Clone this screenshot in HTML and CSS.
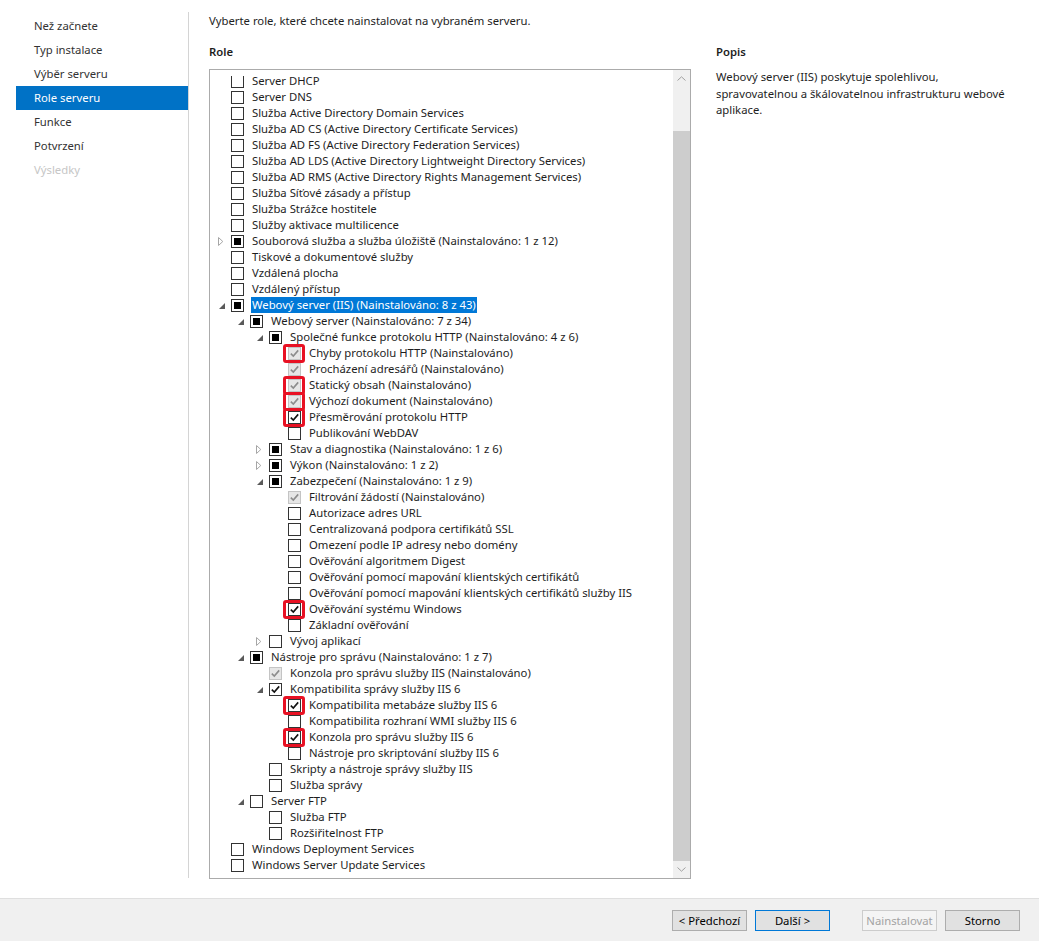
FILE: index.html
```html
<!DOCTYPE html>
<html lang="cs">
<head>
<meta charset="utf-8">
<title>Průvodce přidáním rolí a funkcí</title>
<link rel="stylesheet" href="styles.css">
</head>
<body>
<div class="main">
  <nav class="nav">
    <div class="nav-item">Než začnete</div>
    <div class="nav-item">Typ instalace</div>
    <div class="nav-item">Výběr serveru</div>
    <div class="nav-item active">Role serveru</div>
    <div class="nav-item">Funkce</div>
    <div class="nav-item">Potvrzení</div>
    <div class="nav-item disabled">Výsledky</div>
  </nav>
  <section class="content">
    <p class="intro">Vyberte role, které chcete nainstalovat na vybraném serveru.</p>
    <div class="columns">
      <div class="roles">
        <h2 class="heading">Role</h2>
        <div class="listbox">
          <div class="viewport">
            <div class="tree">
              <div class="row l0"><span class="exp"></span><span class="cb"></span><span class="lbl">Server DHCP</span></div>
              <div class="row l0"><span class="exp"></span><span class="cb"></span><span class="lbl">Server DNS</span></div>
              <div class="row l0"><span class="exp"></span><span class="cb"></span><span class="lbl">Služba Active Directory Domain Services</span></div>
              <div class="row l0"><span class="exp"></span><span class="cb"></span><span class="lbl">Služba AD CS (Active Directory Certificate Services)</span></div>
              <div class="row l0"><span class="exp"></span><span class="cb"></span><span class="lbl">Služba AD FS (Active Directory Federation Services)</span></div>
              <div class="row l0"><span class="exp"></span><span class="cb"></span><span class="lbl">Služba AD LDS (Active Directory Lightweight Directory Services)</span></div>
              <div class="row l0"><span class="exp"></span><span class="cb"></span><span class="lbl">Služba AD RMS (Active Directory Rights Management Services)</span></div>
              <div class="row l0"><span class="exp"></span><span class="cb"></span><span class="lbl">Služba Síťové zásady a přístup</span></div>
              <div class="row l0"><span class="exp"></span><span class="cb"></span><span class="lbl">Služba Strážce hostitele</span></div>
              <div class="row l0"><span class="exp"></span><span class="cb"></span><span class="lbl">Služby aktivace multilicence</span></div>
              <div class="row l0"><span class="exp closed"><svg width="6" height="9" viewBox="0 0 6 9"><path d="M0.5 0.5 L4.8 4.5 L0.5 8.5 Z" fill="none" stroke="#a6a6a6"/></svg></span><span class="cb ind"></span><span class="lbl">Souborová služba a služba úložiště (Nainstalováno: 1 z 12)</span></div>
              <div class="row l0"><span class="exp"></span><span class="cb"></span><span class="lbl">Tiskové a dokumentové služby</span></div>
              <div class="row l0"><span class="exp"></span><span class="cb"></span><span class="lbl">Vzdálená plocha</span></div>
              <div class="row l0"><span class="exp"></span><span class="cb"></span><span class="lbl">Vzdálený přístup</span></div>
              <div class="row l0"><span class="exp open"><svg width="6" height="6" viewBox="0 0 6 6"><path d="M6 0 L6 6 L0 6 Z" fill="#5a5a5a"/></svg></span><span class="cb ind"></span><span class="lbl sel">Webový server (IIS) (Nainstalováno: 8 z 43)</span></div>
              <div class="row l1"><span class="exp open"><svg width="6" height="6" viewBox="0 0 6 6"><path d="M6 0 L6 6 L0 6 Z" fill="#5a5a5a"/></svg></span><span class="cb ind"></span><span class="lbl">Webový server (Nainstalováno: 7 z 34)</span></div>
              <div class="row l2"><span class="exp open"><svg width="6" height="6" viewBox="0 0 6 6"><path d="M6 0 L6 6 L0 6 Z" fill="#5a5a5a"/></svg></span><span class="cb ind"></span><span class="lbl">Společné funkce protokolu HTTP (Nainstalováno: 4 z 6)</span></div>
              <div class="row l3"><span class="exp"></span><span class="cb dis mark"><svg width="11" height="11" viewBox="0 0 11 11"><path d="M1.8 5.6 L4.3 8 L9.2 2.4" fill="none" stroke="#8c8c8c" stroke-width="1.6"/></svg></span><span class="lbl">Chyby protokolu HTTP (Nainstalováno)</span></div>
              <div class="row l3"><span class="exp"></span><span class="cb dis"><svg width="11" height="11" viewBox="0 0 11 11"><path d="M1.8 5.6 L4.3 8 L9.2 2.4" fill="none" stroke="#8c8c8c" stroke-width="1.6"/></svg></span><span class="lbl">Procházení adresářů (Nainstalováno)</span></div>
              <div class="row l3"><span class="exp"></span><span class="cb dis mark"><svg width="11" height="11" viewBox="0 0 11 11"><path d="M1.8 5.6 L4.3 8 L9.2 2.4" fill="none" stroke="#8c8c8c" stroke-width="1.6"/></svg></span><span class="lbl">Statický obsah (Nainstalováno)</span></div>
              <div class="row l3"><span class="exp"></span><span class="cb dis mark"><svg width="11" height="11" viewBox="0 0 11 11"><path d="M1.8 5.6 L4.3 8 L9.2 2.4" fill="none" stroke="#8c8c8c" stroke-width="1.6"/></svg></span><span class="lbl">Výchozí dokument (Nainstalováno)</span></div>
              <div class="row l3"><span class="exp"></span><span class="cb mark"><svg width="11" height="11" viewBox="0 0 11 11"><path d="M1.8 5.6 L4.3 8 L9.2 2.4" fill="none" stroke="#111" stroke-width="1.6"/></svg></span><span class="lbl">Přesměrování protokolu HTTP</span></div>
              <div class="row l3"><span class="exp"></span><span class="cb"></span><span class="lbl">Publikování WebDAV</span></div>
              <div class="row l2"><span class="exp closed"><svg width="6" height="9" viewBox="0 0 6 9"><path d="M0.5 0.5 L4.8 4.5 L0.5 8.5 Z" fill="none" stroke="#a6a6a6"/></svg></span><span class="cb ind"></span><span class="lbl">Stav a diagnostika (Nainstalováno: 1 z 6)</span></div>
              <div class="row l2"><span class="exp closed"><svg width="6" height="9" viewBox="0 0 6 9"><path d="M0.5 0.5 L4.8 4.5 L0.5 8.5 Z" fill="none" stroke="#a6a6a6"/></svg></span><span class="cb ind"></span><span class="lbl">Výkon (Nainstalováno: 1 z 2)</span></div>
              <div class="row l2"><span class="exp open"><svg width="6" height="6" viewBox="0 0 6 6"><path d="M6 0 L6 6 L0 6 Z" fill="#5a5a5a"/></svg></span><span class="cb ind"></span><span class="lbl">Zabezpečení (Nainstalováno: 1 z 9)</span></div>
              <div class="row l3"><span class="exp"></span><span class="cb dis"><svg width="11" height="11" viewBox="0 0 11 11"><path d="M1.8 5.6 L4.3 8 L9.2 2.4" fill="none" stroke="#8c8c8c" stroke-width="1.6"/></svg></span><span class="lbl">Filtrování žádostí (Nainstalováno)</span></div>
              <div class="row l3"><span class="exp"></span><span class="cb"></span><span class="lbl">Autorizace adres URL</span></div>
              <div class="row l3"><span class="exp"></span><span class="cb"></span><span class="lbl">Centralizovaná podpora certifikátů SSL</span></div>
              <div class="row l3"><span class="exp"></span><span class="cb"></span><span class="lbl">Omezení podle IP adresy nebo domény</span></div>
              <div class="row l3"><span class="exp"></span><span class="cb"></span><span class="lbl">Ověřování algoritmem Digest</span></div>
              <div class="row l3"><span class="exp"></span><span class="cb"></span><span class="lbl">Ověřování pomocí mapování klientských certifikátů</span></div>
              <div class="row l3"><span class="exp"></span><span class="cb"></span><span class="lbl">Ověřování pomocí mapování klientských certifikátů služby IIS</span></div>
              <div class="row l3"><span class="exp"></span><span class="cb mark"><svg width="11" height="11" viewBox="0 0 11 11"><path d="M1.8 5.6 L4.3 8 L9.2 2.4" fill="none" stroke="#111" stroke-width="1.6"/></svg></span><span class="lbl">Ověřování systému Windows</span></div>
              <div class="row l3"><span class="exp"></span><span class="cb"></span><span class="lbl">Základní ověřování</span></div>
              <div class="row l2"><span class="exp closed"><svg width="6" height="9" viewBox="0 0 6 9"><path d="M0.5 0.5 L4.8 4.5 L0.5 8.5 Z" fill="none" stroke="#a6a6a6"/></svg></span><span class="cb"></span><span class="lbl">Vývoj aplikací</span></div>
              <div class="row l1"><span class="exp open"><svg width="6" height="6" viewBox="0 0 6 6"><path d="M6 0 L6 6 L0 6 Z" fill="#5a5a5a"/></svg></span><span class="cb ind"></span><span class="lbl">Nástroje pro správu (Nainstalováno: 1 z 7)</span></div>
              <div class="row l2"><span class="exp"></span><span class="cb dis"><svg width="11" height="11" viewBox="0 0 11 11"><path d="M1.8 5.6 L4.3 8 L9.2 2.4" fill="none" stroke="#8c8c8c" stroke-width="1.6"/></svg></span><span class="lbl">Konzola pro správu služby IIS (Nainstalováno)</span></div>
              <div class="row l2"><span class="exp open"><svg width="6" height="6" viewBox="0 0 6 6"><path d="M6 0 L6 6 L0 6 Z" fill="#5a5a5a"/></svg></span><span class="cb"><svg width="11" height="11" viewBox="0 0 11 11"><path d="M1.8 5.6 L4.3 8 L9.2 2.4" fill="none" stroke="#111" stroke-width="1.6"/></svg></span><span class="lbl">Kompatibilita správy služby IIS 6</span></div>
              <div class="row l3"><span class="exp"></span><span class="cb mark"><svg width="11" height="11" viewBox="0 0 11 11"><path d="M1.8 5.6 L4.3 8 L9.2 2.4" fill="none" stroke="#111" stroke-width="1.6"/></svg></span><span class="lbl">Kompatibilita metabáze služby IIS 6</span></div>
              <div class="row l3"><span class="exp"></span><span class="cb"></span><span class="lbl">Kompatibilita rozhraní WMI služby IIS 6</span></div>
              <div class="row l3"><span class="exp"></span><span class="cb mark"><svg width="11" height="11" viewBox="0 0 11 11"><path d="M1.8 5.6 L4.3 8 L9.2 2.4" fill="none" stroke="#111" stroke-width="1.6"/></svg></span><span class="lbl">Konzola pro správu služby IIS 6</span></div>
              <div class="row l3"><span class="exp"></span><span class="cb"></span><span class="lbl">Nástroje pro skriptování služby IIS 6</span></div>
              <div class="row l2"><span class="exp"></span><span class="cb"></span><span class="lbl">Skripty a nástroje správy služby IIS</span></div>
              <div class="row l2"><span class="exp"></span><span class="cb"></span><span class="lbl">Služba správy</span></div>
              <div class="row l1"><span class="exp open"><svg width="6" height="6" viewBox="0 0 6 6"><path d="M6 0 L6 6 L0 6 Z" fill="#5a5a5a"/></svg></span><span class="cb"></span><span class="lbl">Server FTP</span></div>
              <div class="row l2"><span class="exp"></span><span class="cb"></span><span class="lbl">Služba FTP</span></div>
              <div class="row l2"><span class="exp"></span><span class="cb"></span><span class="lbl">Rozšiřitelnost FTP</span></div>
              <div class="row l0"><span class="exp"></span><span class="cb"></span><span class="lbl">Windows Deployment Services</span></div>
              <div class="row l0"><span class="exp"></span><span class="cb"></span><span class="lbl">Windows Server Update Services</span></div>
            </div>
          </div>
          <div class="scrollbar">
            <div class="sb-btn"><svg width="9" height="5" viewBox="0 0 9 5"><path d="M0.5 4.5 L4.5 0.8 L8.5 4.5" fill="none" stroke="#a0a0a0"/></svg></div>
            <div class="sb-track"><div class="sb-thumb"></div></div>
            <div class="sb-btn"><svg width="9" height="5" viewBox="0 0 9 5"><path d="M0.5 0.5 L4.5 4.2 L8.5 0.5" fill="none" stroke="#a0a0a0"/></svg></div>
          </div>
        </div>
      </div>
      <div class="desc">
        <h2 class="heading">Popis</h2>
        <p class="desc-text">Webový server (IIS) poskytuje spolehlivou,<br>spravovatelnou a škálovatelnou infrastrukturu webové<br>aplikace.</p>
      </div>
    </div>
  </section>
</div>
<footer class="footer">
  <button class="btn">&lt; Předchozí</button>
  <button class="btn default">Další &gt;</button>
  <button class="btn disabled gap">Nainstalovat</button>
  <button class="btn">Storno</button>
</footer>
</body>
</html>
```
FILE: styles.css
```css
* { box-sizing: border-box; }
html, body { margin: 0; padding: 0; }
body {
  width: 1039px;
  height: 941px;
  background: #ffffff;
  font-family: "Noto Sans", "Open Sans", sans-serif;
  font-size: 11.3px;
  color: #1e1e1e;
  display: flex;
  flex-direction: column;
  overflow: hidden;
}
.main {
  flex: 1;
  display: flex;
  min-height: 0;
}
.nav {
  width: 189px;
  padding: 2px 0 0 16px;
  margin-top: 12px;
  margin-bottom: 20px;
  border-right: 1px solid #d4d4d4;
}
.nav-item {
  height: 24px;
  line-height: 24px;
  padding-left: 18px;
  color: #333;
}
.nav-item.active { background: #0072c6; color: #fff; }
.nav-item.disabled { color: #c6c6c6; }
.content {
  flex: 1;
  padding: 12px 0 0 20px;
}
.intro { margin: 0; line-height: 18px; }
.columns {
  display: flex;
  gap: 25px;
  margin-top: 13px;
}
.roles { width: 482px; }
.heading {
  margin: 0 0 8px 0;
  font-size: 11.3px;
  font-weight: 600;
  line-height: 18px;
}
.listbox {
  height: 810px;
  border: 1px solid #ababab;
  display: flex;
}
.viewport {
  flex: 1;
  margin-top: 6px;
  overflow: hidden;
  position: relative;
}
.tree { margin-top: -3px; }
.row {
  height: 16px;
  display: flex;
  align-items: center;
  white-space: nowrap;
  line-height: 16px;
}
.l0 { padding-left: 4px; }
.l1 { padding-left: 23px; }
.l2 { padding-left: 42px; }
.l3 { padding-left: 61px; }
.exp {
  width: 17px;
  height: 16px;
  display: flex;
  align-items: center;
  flex: none;
}
.exp.closed { padding-left: 4px; }
.exp.open { padding-left: 5px; align-items: flex-end; padding-bottom: 4px; }
.exp svg { display: block; }
.cb {
  width: 13px;
  height: 13px;
  border: 1px solid #333;
  background: #fff;
  flex: none;
  position: relative;
  display: flex;
  align-items: center;
  justify-content: center;
}
.cb svg { display: block; }
.cb.ind::before {
  content: "";
  width: 7px;
  height: 7px;
  background: #000;
}
.cb.dis { border-color: #c4c4c4; background: #e6e6e6; }
.cb.mark::after {
  content: "";
  position: absolute;
  left: -6px;
  right: -5px;
  top: -4px;
  bottom: -4px;
  border: 3px solid #e81123;
  border-radius: 3px;
}
.lbl { margin-left: 8px; }
.lbl.sel {
  background: #0078d7;
  color: #fff;
  margin-left: 7px;
  padding: 0 1px;
}
.scrollbar {
  width: 17px;
  background: #f0f0f0;
  display: flex;
  flex-direction: column;
}
.sb-btn {
  height: 17px;
  display: flex;
  align-items: center;
  justify-content: center;
}
.sb-track {
  flex: 1;
  display: flex;
  flex-direction: column;
  padding-top: 44px;
}
.sb-thumb { flex: 1; background: #cdcdcd; }
.desc { flex: 1; padding-right: 20px; }
.desc-text { margin: 0; line-height: 16.5px; white-space: nowrap; }
.footer {
  height: 43px;
  flex: none;
  background: #f0f0f0;
  border-top: 1px solid #dfdfdf;
  display: flex;
  justify-content: flex-end;
  align-items: flex-start;
  padding: 11px 19px 0 0;
  gap: 8px;
}
.btn {
  width: 75px;
  height: 21px;
  font-family: inherit;
  font-size: 11.3px;
  color: #000;
  background: #e1e1e1;
  border: 1px solid #adadad;
  padding: 1px 0 0 0;
  line-height: 18px;
}
.btn.default { border-color: #0078d7; }
.btn.disabled { color: #a3a3a3; background: #f4f4f4; border-color: #cccccc; }
.btn.gap { margin-left: 24px; }
```
